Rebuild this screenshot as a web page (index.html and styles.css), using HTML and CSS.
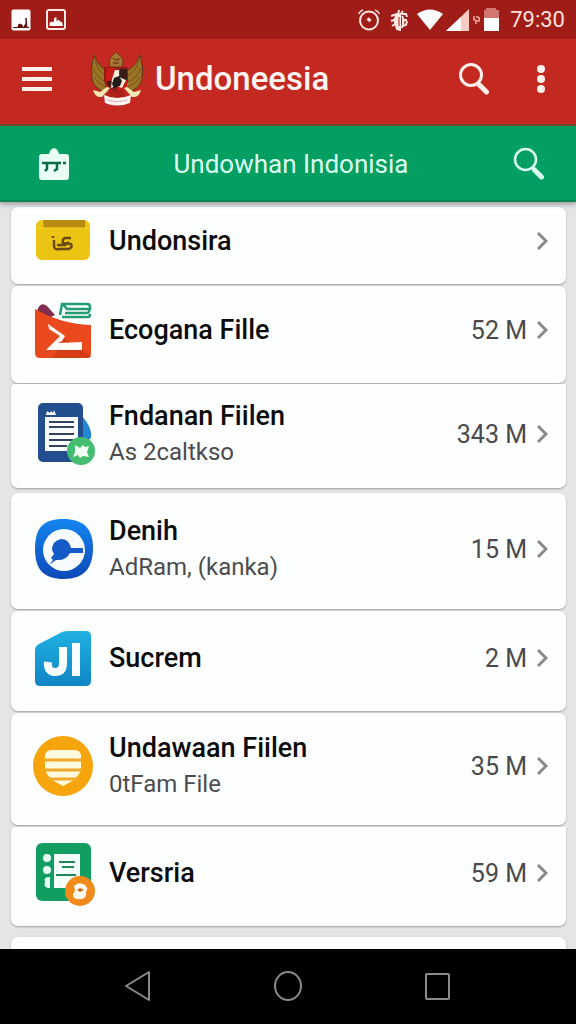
FILE: index.html
```html
<!DOCTYPE html>
<html lang="id">
<head>
<meta charset="utf-8">
<meta name="viewport" content="width=device-width, initial-scale=1.0">
<title>Undoneesia</title>
<link rel="stylesheet" href="styles.css">
</head>
<body>

<!-- Status bar -->
<div class="status-bar">
    <div class="status-left">
        <svg width="20" height="22" viewBox="0 0 20 22"><rect x="0.5" y="0.5" width="19" height="21" rx="2" fill="#fff"/><path d="M2 18.500h16M7 18l1-3 3 1 1 2zM13 18l2-4V9l1 9z" fill="#5b1410" stroke="#5b1410"/></svg>
        <svg width="20" height="22" viewBox="0 0 20 22"><rect x="1" y="1" width="18" height="19" rx="2" fill="none" stroke="#ffe9e4" stroke-width="2"/><path d="M3.500 17v-3l2-1.500 2 1 1-5h2v4l2-2 1.500 2 2 .5 1 4z" fill="#fff"/></svg>
    </div>
    <div class="status-right">
        <svg width="24" height="24" viewBox="0 0 24 24" fill="none" stroke="#ffe9e4" stroke-width="2"><circle cx="12" cy="12.500" r="9"/><path d="M1.500 6Q3 3 6 2M18 2q3 1 4.500 4" stroke-width="1.500"/><path d="M10.500 10.500l3 2.500" stroke-width="3"/></svg>
        <svg class="bug" width="18" height="22" viewBox="0 0 18 22" fill="none" stroke="#ffe9e4" stroke-width="2"><path d="M1 7l6-2M1 12l6-2M2 17l5-3M12 5h4l1 3M13 11h4M12 17l4-1 1-4M9 1L8 6M13 2l-3 4"/><path d="M8 5Q4 8 5 14l2 6 3 1V6zM12 7q3 4 0 12" fill="#ffe9e4"/><path d="M9 8v9" stroke="#9f1c17" stroke-width="1"/></svg>
        <svg width="26" height="22" viewBox="0 0 26 22"><path d="M0 5Q13-4 26 5L13 21z" fill="#fff"/></svg>
        <svg width="24" height="24" viewBox="0 0 24 24"><path d="M0 23L23 1v22z" fill="#f6cbc4"/><path d="M0 23L15 9v14z" fill="#fff"/></svg>
        <svg width="8" height="10" viewBox="0 0 8 10" fill="none" stroke="#f3a79e" stroke-width="1.500"><path d="M1 1v4h2M3 2h2q2 1 1 4H3v3"/></svg>
        <svg width="16" height="24" viewBox="0 0 16 24"><path d="M2 0h10v2h3v8H0V2h2z" fill="#cf7770"/><path d="M0 10h15v13H0z" fill="#fff"/></svg>
        <span class="clock">79:30</span>
    </div>
</div>

<!-- App bar -->
<header class="app-bar">
    <button class="icon-btn menu-btn" aria-label="Menu">
        <svg width="30" height="24" viewBox="0 0 30 24"><path d="M0 2h30M0 12h30M0 22h30" stroke="#fff0ec" stroke-width="4"/></svg>
    </button>
    <svg class="emblem" width="54" height="54" viewBox="0 0 54 54">
        <path d="M4 3Q0 16 2 27q2 10 14 13l8-8-6-13Q8 15 4 3zM50 3q4 13 2 24-2 10-14 13l-8-8 6-13Q46 15 50 3z" fill="#9b7424" stroke="#55371b" stroke-width="1"/>
        <path d="M5 9q4 12 12 15M3 16q5 12 14 14M4 25q5 8 12 10M49 9q-4 12-12 15M51 16q-5 12-14 14M50 25q-5 8-12 10" fill="none" stroke="#6f5224" stroke-width="1"/>
        <path d="M20 15q-2-9 3-12l3-3 3 3q6 3 3 12z" fill="#a87532" stroke="#6f351a"/>
        <path d="M23 6l3 2 4-1M23 11h6" stroke="#56311b" fill="none"/>
        <path d="M14 15h24v14q-2 9-12 14-10-5-12-14z" fill="#941c18"/>
        <path d="M16 16h10v13H16zM27 29h10v9H27z" fill="#c91919"/>
        <path d="M17 29h8v8l-6-3zM30 17h7v11h-7z" fill="#3a1c1b"/>
        <path d="M25 18h4v7l7 3-4 8-6-2-5 2 1-9z" fill="#f5eedf"/>
        <path d="M24 26l5-2 3 5-2 5-6 2-2-4z" fill="#231b1a"/>
        <path d="M17 35l-7 5-7-2q2 8 9 7l8-9zM37 35l7 5 7-2q-2 8-9 7l-8-9z" fill="#f4e8b4"/>
        <path d="M20 37l6 3 7-3 3 10H17z" fill="#ac231b"/>
        <path d="M14 43q13 6 27 0l-1 8q-13 5-25 0z" fill="#fff4ef"/>
        <path d="M18 48q9 3 19 0" fill="none" stroke="#b9897f" stroke-dasharray="2 1"/>
    </svg>
    <h1 class="app-title">Undoneesia</h1>
    <button class="icon-btn" aria-label="Search">
        <svg width="32" height="34" viewBox="0 0 32 34" fill="none" stroke="#fff0ec"><circle cx="13" cy="13" r="10.500" stroke-width="3"/><path d="M19 20l3 3" stroke-width="3"/><path d="M21.500 23l7 7" stroke-width="5" stroke-linecap="round"/></svg>
    </button>
    <button class="icon-btn more-btn" aria-label="More options">
        <svg width="8" height="28" viewBox="0 0 8 28" fill="#fff0ec"><circle cx="4" cy="4" r="4"/><circle cx="4" cy="14" r="4"/><circle cx="4" cy="24" r="4"/></svg>
    </button>
</header>

<!-- Section bar -->
<div class="section-bar">
    <button class="icon-btn" aria-label="Store">
        <svg width="30" height="34" viewBox="0 0 30 34"><path d="M3 7h7q1-5 5-6 4 1 5 6h7q3 0 3 3v20q0 3-3 3H3q-3 0-3-3V10q0-3 3-3z" fill="#e9fff5"/><path d="M3 16h15M18 16h4M24 16h3M8 16v6l-2 2M18 17v5l-3 2" fill="none" stroke="#086b45" stroke-width="2.500"/></svg>
    </button>
    <h2 class="section-title">Undowhan Indonisia</h2>
    <button class="icon-btn" aria-label="Search section">
        <svg width="32" height="34" viewBox="0 0 32 34" fill="none" stroke="#d8fff0"><circle cx="12.500" cy="12.500" r="10.500" stroke-width="2.500"/><path d="M19 20l3 3" stroke-width="3"/><path d="M21.500 23l7 7" stroke-width="5" stroke-linecap="round"/></svg>
    </button>
</div>

<!-- File list -->
<main class="list-area">
<ul class="file-list">
    <li class="card first"><a class="row" href="#">
        <svg class="file-icon" viewBox="0 0 60 60"><rect x="3" y="9" width="54" height="40" rx="6" fill="#ecc514"/><path d="M10 9h42v8H11z" fill="#b98a10"/><path d="M4 17h52" stroke="#f7d42a"/><path d="M20 25v2M21 29v6q0 4 5 3h10q4-2 2-5l-8-1q-1-4 2-5h6M24 34h8l4-3" fill="none" stroke="#694c14" stroke-width="2.500"/></svg>
        <span class="labels"><span class="name">Undonsira</span></span>
        <svg class="chevron" viewBox="0 0 12 20"><path d="M2 2l8 8-8 8"/></svg>
    </a></li>

    <li class="card tall-gap"><a class="row" href="#">
        <svg class="file-icon" viewBox="0 0 60 60"><path d="M4 11Q7 1 14 6l8 9-8 4z" fill="#802f51"/><path d="M30 4h24q3 0 3 3v2H34zM32 13h21q4 0 3-4M29 4l-2 11M29 17h26q2 0 2-3" fill="none" stroke="#219c75" stroke-width="2.500"/><path d="M2 9q26 15 56 16v28q0 5-5 5H7q-5 0-5-5z" fill="#e9491d"/><path d="M31 38l27 18q-1 2-5 2H20z" fill="#d43c14"/><path d="M15 24l17 12-3 5-4 2 24-1v8H13l14-14-11-7z" fill="#fffaf5"/></svg>
        <span class="labels"><span class="name">Ecogana Fille</span></span>
        <span class="size">52 M</span>
        <svg class="chevron" viewBox="0 0 12 20"><path d="M2 2l8 8-8 8"/></svg>
    </a></li>

    <li class="card joined"><a class="row" href="#">
        <svg class="file-icon" viewBox="0 0 60 60"><path d="M46 9q14 14 12 25l-12 9z" fill="#2486d5"/><rect x="5" y="-1" width="45" height="59" rx="5" fill="#234e8d"/><path d="M12 13h33v34H12z" fill="#fafcff"/><path d="M13 11l1-4 3 2 1-2 2 2 1-3 2 5z" fill="#fff"/><path d="M16 18h25M16 23h25M16 30h25M16 36h25M16 42h18" stroke="#32465e" stroke-width="2"/><circle cx="48" cy="47" r="14" fill="#45bd70"/><path d="M42 41l5 3 3-3 2 2 4-1-2 6 2 5-6-1-3 2-2-3-5 2 2-5z" fill="#effff3"/></svg>
        <span class="labels"><span class="name">Fndanan Fiilen</span><span class="detail">As 2caltkso</span></span>
        <span class="size">343 M</span>
        <svg class="chevron" viewBox="0 0 12 20"><path d="M2 2l8 8-8 8"/></svg>
    </a></li>

    <li class="card new-group"><a class="row" href="#">
        <svg class="file-icon" viewBox="0 0 60 60"><defs><linearGradient id="blue" x2="0" y2="1"><stop stop-color="#1486ef"/><stop offset="1" stop-color="#0c49b7"/></linearGradient></defs><path d="M30 0C50 0 60 9 60 29S51 60 31 60 2 51 2 30 10 0 30 0z" fill="url(#blue)"/><circle cx="31" cy="31" r="21" fill="#f7fdff"/><path d="M50 29H38q-2-9-10-9-9 2-9 11l2 4-3 4 2 2-4 5 7-5q10 1 14-7h13z" fill="#155bc7"/></svg>
        <span class="labels"><span class="name">Denih</span><span class="detail">AdRam, (kanka)</span></span>
        <span class="size">15 M</span>
        <svg class="chevron" viewBox="0 0 12 20"><path d="M2 2l8 8-8 8"/></svg>
    </a></li>

    <li class="card"><a class="row" href="#">
        <svg class="file-icon" viewBox="0 0 60 60"><defs><linearGradient id="cyan" x2="0" y2="1"><stop stop-color="#20b1e2"/><stop offset="1" stop-color="#1185c5"/></linearGradient></defs><path d="M2 22q0-4 4-6L29 4q3-1 6-1h18q5 0 5 5v45q0 5-5 5H7q-5 0-5-5z" fill="url(#cyan)"/><path d="M15 34q-1 10 7 10 8 0 8-9V19M43 15v33" fill="none" stroke="#fafeff" stroke-width="8"/></svg>
        <span class="labels"><span class="name">Sucrem</span></span>
        <span class="size">2 M</span>
        <svg class="chevron" viewBox="0 0 12 20"><path d="M2 2l8 8-8 8"/></svg>
    </a></li>

    <li class="card"><a class="row" href="#">
        <svg class="file-icon" viewBox="0 0 60 60"><circle cx="30" cy="30" r="30" fill="#f6a50c"/><path d="M12 19q1-5 7-5h22q6 0 7 5v14q-2 10-18 17-16-7-18-17z" fill="#fff9dd"/><path d="M12 24h36M12 34h36M15 43h30" stroke="#efaa2d" stroke-width="3"/></svg>
        <span class="labels"><span class="name">Undawaan Fiilen</span><span class="detail">0tFam File</span></span>
        <span class="size">35 M</span>
        <svg class="chevron" viewBox="0 0 12 20"><path d="M2 2l8 8-8 8"/></svg>
    </a></li>

    <li class="card joined"><a class="row" href="#">
        <svg class="file-icon" viewBox="0 0 60 60"><rect x="3" y="0" width="55" height="58" rx="6" fill="#129e60"/><path d="M21 11h26v34H21z" fill="#f4fff9"/><path d="M26 19h16M29 24h12M23 32h20" stroke="#28865b" stroke-width="2"/><circle cx="14" cy="15" r="4" fill="#e5fff3"/><circle cx="14" cy="27" r="4" fill="#e5fff3"/><path d="M17 34v11q-7 0-5-6-2-5 5-5z" fill="#e5fff3"/><circle cx="47" cy="48" r="15" fill="#f08a1b"/><path d="M41 43q5-5 11-1 4 4 1 6 1 8-5 8-9 1-8-5 3-2 1-8z" fill="#fffaf0"/><path d="M44 47l3-2 4 2-4 2z" fill="#d8671d"/></svg>
        <span class="labels"><span class="name">Versria</span></span>
        <span class="size">59 M</span>
        <svg class="chevron" viewBox="0 0 12 20"><path d="M2 2l8 8-8 8"/></svg>
    </a></li>

    <li class="card last"><a class="row" href="#" aria-label="Next file">
        <svg class="file-icon" viewBox="0 0 60 60"><circle cx="30" cy="30" r="30" fill="#efd22b"/></svg>
    </a></li>
</ul>
</main>

<!-- Navigation buttons -->
<nav class="nav-bar">
    <button class="icon-btn" aria-label="Back"><svg width="28" height="32" viewBox="0 0 28 32"><path d="M2 16L25 2v28z"/></svg></button>
    <button class="icon-btn" aria-label="Home"><svg width="30" height="32" viewBox="0 0 30 32"><ellipse cx="15" cy="16" rx="13" ry="14"/></svg></button>
    <button class="icon-btn" aria-label="Recent apps"><svg width="28" height="32" viewBox="0 0 28 32"><rect x="2" y="4" width="23" height="25" rx="1"/></svg></button>
</nav>

</body>
</html>
```
FILE: styles.css
```css
* {
    box-sizing: border-box;
}

body {
    margin: 0;
    height: 100vh;
    display: flex;
    flex-direction: column;
    background: #e4e5e7;
    font-family: Roboto, "Liberation Sans", sans-serif;
    color: #0c0c0c;
}

svg {
    display: block;
    flex: none;
}

.icon-btn {
    padding: 0;
    border: none;
    background: none;
    cursor: pointer;
}

/* Status bar */
.status-bar {
    display: flex;
    justify-content: space-between;
    align-items: center;
    padding: 0 11px;
    background: #9f1c17;
    flex: none;
}

.status-left {
    display: flex;
    gap: 15px;
}

.status-right {
    display: flex;
    align-items: center;
    gap: 3px;
}

.bug {
    margin: 0 6px;
}

.clock {
    margin-left: 7px;
    font-size: 22px;
    line-height: 39px;
    color: #ffe1dc;
}

/* App bar */
.app-bar {
    display: flex;
    align-items: center;
    padding: 13px 31px 18px 22px;
    background: #c32921;
    border-bottom: 2px solid #7b4b2c;
    flex: none;
}

.emblem {
    margin: 0 11px 0 38px;
}

.app-title {
    flex: 1;
    margin: 0;
    font-size: 33px;
    font-weight: 500;
    line-height: 54px;
    color: #fff4f1;
}

.more-btn {
    margin-left: 47px;
}

/* Section bar */
.section-bar {
    display: flex;
    align-items: center;
    padding: 20px 31px 18px 39px;
    background: #039e61;
    border-bottom: 2px solid #078853;
    box-shadow: 0 2px 5px rgba(0, 0, 0, 0.35);
    z-index: 1;
    flex: none;
}

.section-title {
    flex: 1;
    margin: 0;
    font-size: 26px;
    font-weight: 400;
    line-height: 36px;
    text-align: center;
    color: #dcfff1;
}

/* File list */
.list-area {
    flex: 1;
    min-height: 0;
    overflow: hidden;
}

.file-list {
    list-style: none;
    margin: 0;
    padding: 5px 10px 0 11px;
}

.card {
    margin-bottom: 2px;
    background: #fdfefe;
    border-radius: 7px;
    box-shadow: 0 1px 2px rgba(0, 0, 0, 0.3);
}

.row {
    display: flex;
    align-items: center;
    padding: 17px 18px 23px 22px;
    color: inherit;
    text-decoration: none;
}

.first .row {
    padding-top: 4px;
    padding-bottom: 13px;
}

.tall-gap {
    margin-bottom: 1px;
}

.tall-gap .row {
    padding-top: 14px;
}

.card.joined {
    border-top-left-radius: 4px;
    border-top-right-radius: 0;
}

.joined .row {
    padding-top: 16px;
}

.tall-gap + .joined {
    margin-bottom: 5px;
}

.tall-gap + .joined .row {
    padding-top: 14px;
    padding-bottom: 18px;
}

.new-group .row {
    padding-top: 20px;
    padding-bottom: 24px;
}

.last {
    margin-top: 11px;
}

.last .row {
    padding-top: 12px;
}

.file-icon {
    width: 60px;
    height: 60px;
    overflow: visible;
}

.labels {
    flex: 1;
    margin-left: 16px;
}

.name,
.detail {
    display: block;
    line-height: 36px;
}

.name {
    font-size: 27px;
    font-weight: 500;
}

.detail {
    font-size: 24px;
    color: #4c4c4e;
}

.size {
    font-size: 25px;
    color: #4a4a4c;
}

.chevron {
    width: 12px;
    height: 20px;
    margin-left: 9px;
    fill: none;
    stroke: #88898b;
    stroke-width: 3;
}

/* Navigation buttons */
.nav-bar {
    display: flex;
    justify-content: space-around;
    padding: 21px 64px 22px;
    background: #000;
    flex: none;
}

.nav-bar svg {
    fill: none;
    stroke: #8b8b8b;
    stroke-width: 2;
    stroke-linejoin: round;
}
```
